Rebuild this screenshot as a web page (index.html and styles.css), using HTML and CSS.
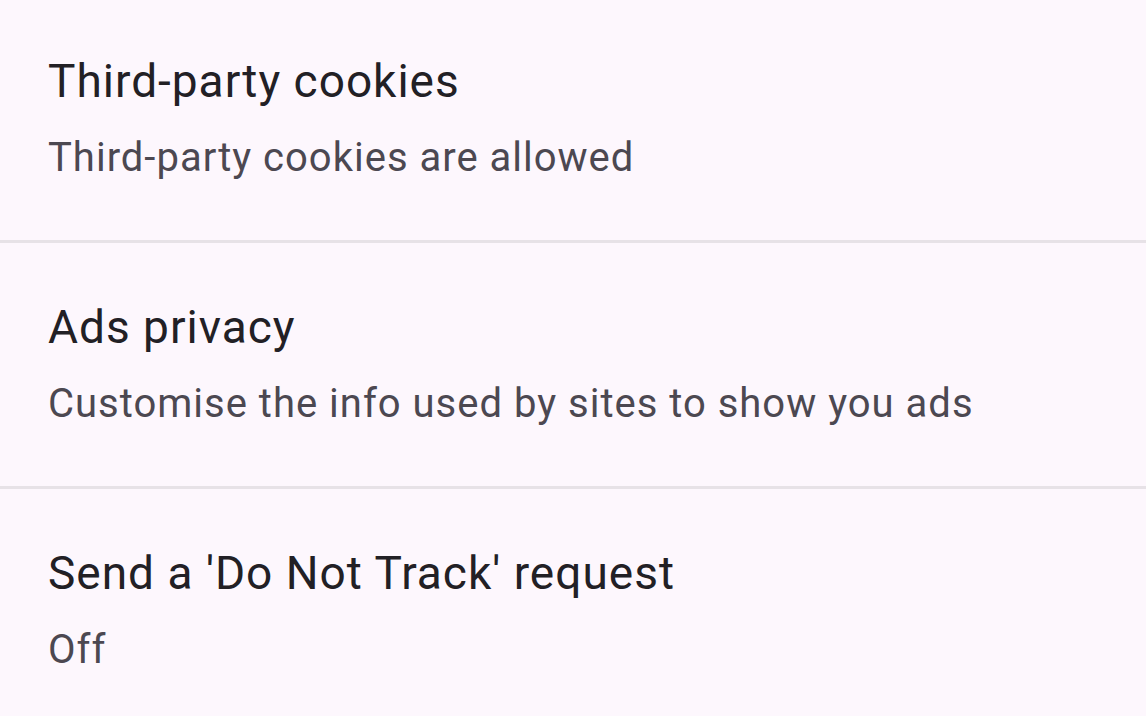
FILE: index.html
```html
<!DOCTYPE html>
<html lang="en">
<head>
<meta charset="utf-8">
<title>Privacy settings</title>
<link rel="stylesheet" href="styles.css">
</head>
<body>
<main class="list">
  <div class="row">
    <div class="title">Third-party cookies</div>
    <div class="summary">Third-party cookies are allowed</div>
  </div>
  <div class="divider"></div>
  <div class="row">
    <div class="title">Ads privacy</div>
    <div class="summary">Customise the info used by sites to show you ads</div>
  </div>
  <div class="divider"></div>
  <div class="row">
    <div class="title">Send a 'Do Not Track' request</div>
    <div class="summary">Off</div>
  </div>
</main>
</body>
</html>
```

FILE: styles.css
```css
html, body {
  margin: 0;
  padding: 0;
  background: #fdf7fd;
  height: 100%;
  overflow: hidden;
}
.list {
  display: flex;
  flex-direction: column;
  margin-top: -3px;
  font-family: Roboto, "Noto Sans", sans-serif;
}
.row {
  display: flex;
  flex-direction: column;
  gap: 13px;
  padding: 50px 48px 53px 48px;
}
.title {
  font-size: 46px;
  line-height: 69px;
  letter-spacing: 1px;
  color: #222025;
}
.summary {
  font-size: 40px;
  line-height: 58px;
  letter-spacing: 1px;
  color: #4c4851;
}
.divider {
  height: 3px;
  background: #e7e2e7;
}
```
